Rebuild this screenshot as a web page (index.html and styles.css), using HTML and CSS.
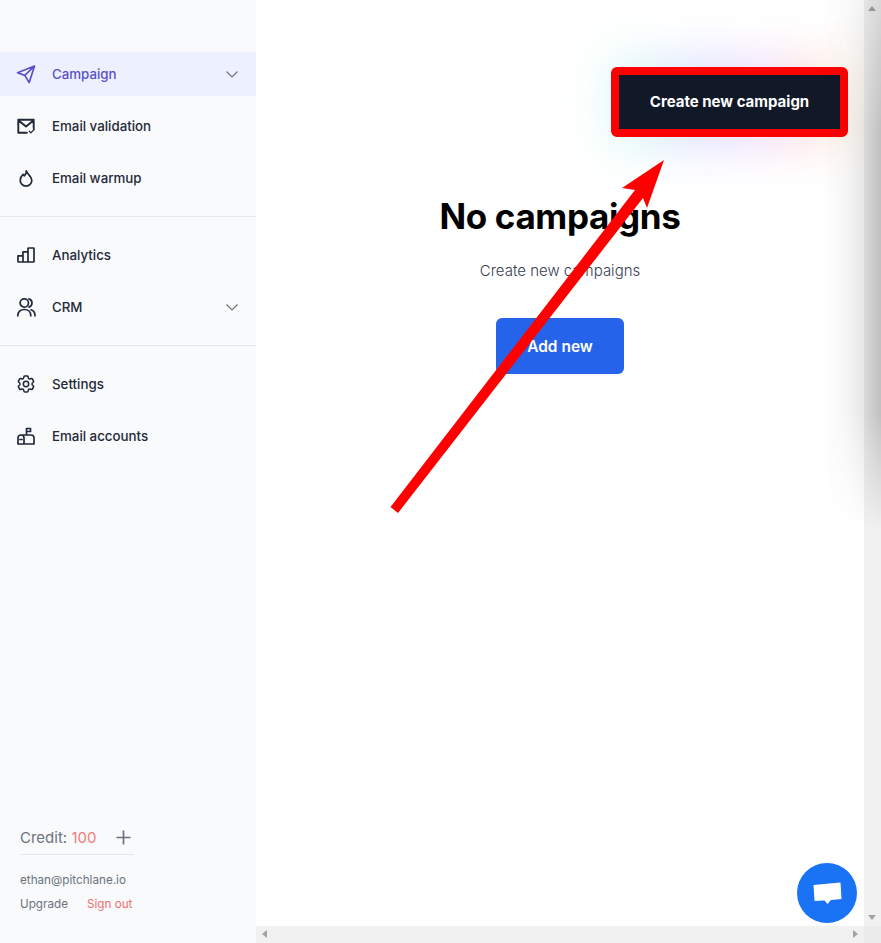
FILE: index.html
```html
<!DOCTYPE html>
<html>
<head>
<meta charset="UTF-8">
<title>Campaigns</title>
<link rel="stylesheet" href="styles.css">
</head>
<body>
<div class="app">
  <aside class="sidebar">
    <nav class="nav">
      <a class="nav_item nav_active">
        <svg class="nav_icon" viewBox="0 0 24 24"><path d="M20.500 4 3.500 10.700 10.800 13.400 15.200 20.600Z M10.800 13.400 20.500 4"/></svg>
        <span>Campaign</span>
        <svg class="nav_chevron" viewBox="0 0 12 12"><path d="M.5 3.500 6 9l5.500-5.500"/></svg>
      </a>
      <a class="nav_item">
        <svg class="nav_icon" viewBox="0 0 24 24"><path class="heavy" d="M12.800 18.800H4.300V5.800h15.400v8.400M4.300 6.200 12 12.500l7.700-6.300"/><path class="thin" d="M15.300 17.300l1.600 1.600 3.400-3.600"/></svg>
        <span>Email validation</span>
      </a>
      <a class="nav_item">
        <svg class="nav_icon" viewBox="0 0 24 24"><path d="M12.300 4.800c.2 2.200-.6 3.600-2 5-.5-.4-.9-.9-1.200-1.500-1.600 1.400-2.900 3.600-2.900 6a5.800 5.800 0 0 0 11.600 0c0-4-4.500-5.900-5.500-9.500Z"/></svg>
        <span>Email warmup</span>
      </a>
      <hr class="nav_rule">
      <a class="nav_item">
        <svg class="nav_icon" viewBox="0 0 24 24"><path d="M4 12.800h5V19H4.500a.5.500 0 0 1-.5-.5ZM9 8.800h5V19H9ZM14 5.500a.5.500 0 0 1 .5-.5h5a.5.500 0 0 1 .5.500v13a.5.500 0 0 1-.5.500H14Z"/></svg>
        <span>Analytics</span>
      </a>
      <a class="nav_item">
        <svg class="nav_icon" viewBox="0 0 24 24"><circle cx="10.300" cy="8" r="4.200"/><path d="M3.800 20.800c0-3.800 2.600-6.300 6.500-6.300s6.500 2.500 6.500 6.300M15 3.900a4.300 4.300 0 0 1 0 8.200M17 14.800c2.500.7 4 2.900 4 6"/></svg>
        <span>CRM</span>
        <svg class="nav_chevron" viewBox="0 0 12 12"><path d="M.5 3.500 6 9l5.500-5.500"/></svg>
      </a>
      <hr class="nav_rule">
      <a class="nav_item">
        <svg class="nav_icon" viewBox="-1.500 -1.500 27 27"><path d="M9.594 3.940c.09-.542.56-.94 1.110-.94h2.593c.55 0 1.020.398 1.110.94l.213 1.281c.063.374.313.686.645.870.074.04.147.083.22.127.325.196.72.257 1.075.124l1.217-.456a1.125 1.125 0 0 1 1.370.49l1.296 2.247a1.125 1.125 0 0 1-.26 1.431l-1.003.827c-.293.241-.438.613-.43.992a7.723 7.723 0 0 1 0 .255c-.008.378.137.75.43.991l1.004.827c.424.35.534.955.26 1.430l-1.298 2.247a1.125 1.125 0 0 1-1.369.491l-1.217-.456c-.355-.133-.75-.072-1.076.124a6.470 6.470 0 0 1-.22.128c-.331.183-.581.495-.644.869l-.213 1.281c-.09.543-.56.94-1.110.94h-2.594c-.55 0-1.019-.398-1.110-.94l-.213-1.281c-.062-.374-.312-.686-.644-.87a6.520 6.520 0 0 1-.22-.127c-.325-.196-.72-.257-1.076-.124l-1.217.456a1.125 1.125 0 0 1-1.369-.49l-1.297-2.247a1.125 1.125 0 0 1 .26-1.431l1.004-.827c.292-.24.437-.613.43-.991a6.932 6.932 0 0 1 0-.255c.007-.38-.138-.751-.43-.992l-1.004-.827a1.125 1.125 0 0 1-.26-1.430l1.297-2.247a1.125 1.125 0 0 1 1.370-.491l1.216.456c.356.133.751.072 1.076-.124.072-.044.146-.086.22-.128.332-.183.582-.495.644-.869l.214-1.280Z"/><circle cx="12" cy="12" r="3"/></svg>
        <span>Settings</span>
      </a>
      <a class="nav_item">
        <svg class="nav_icon" viewBox="0 0 24 24"><path d="M4 20v-6a3 3 0 0 1 3-3h10a3 3 0 0 1 3 3v6ZM10 20v-6a3 3 0 0 0-3-3M12.500 11V4.500h4v3h-4M6 15.500h2"/></svg>
        <span>Email accounts</span>
      </a>
    </nav>
    <div class="account">
      <div class="credit">
        <span>Credit: <b class="credit_num">100</b></span>
        <svg class="credit_add" viewBox="0 0 16 16"><path d="M8 .5v15M.5 8h15"/></svg>
      </div>
      <div class="account_mail">ethan@pitchlane.io</div>
      <div class="account_links">
        <a>Upgrade</a>
        <a class="signout">Sign out</a>
      </div>
    </div>
  </aside>

  <div class="content">
    <div class="content_row">
      <main class="main">
        <div class="toolbar">
          <div class="cta_wrap">
            <div class="cta">Create new campaign</div>
          </div>
        </div>
        <div class="empty">
          <h1>No campaigns</h1>
          <p>Create new campaigns</p>
          <div class="add_button">Add new</div>
        </div>
      </main>
      <div class="vscroll">
        <i class="tri tri_up"></i>
        <i class="tri tri_down"></i>
      </div>
    </div>
    <div class="hscroll">
      <div class="hscroll_track">
        <i class="tri tri_left"></i>
        <i class="tri tri_right"></i>
      </div>
      <div class="corner"></div>
    </div>
  </div>
</div>

<div class="drawer_shadow"></div>

<svg class="arrow" viewBox="0 0 881 943"><polygon points="390.500,507 635,190 622,188 664,160 647,208 643,198 398,513"/></svg>

<div class="chat">
  <svg viewBox="0 0 30 24"><path d="M1.500 4 28.500 1.500 29.500 18 19 19 15.500 23 12.500 19.500 2.500 20Z"/></svg>
</div>
</body>
</html>
```

FILE: styles.css
```css
html, body {
  height: 100%;
  margin: 0px;
  overflow: hidden;
}

body {
  font-family: Inter, "Noto Sans", sans-serif;
  background: #ffffff;
  color: #111827;
}

.app {
  display: flex;
  height: 943px;
}

/* sidebar */
.sidebar {
  width: 256px;
  flex: none;
  display: flex;
  flex-direction: column;
  background: #f9fafc;
}

.nav {
  padding-top: 52px;
}

.nav_item {
  display: flex;
  align-items: center;
  gap: 14px;
  height: 44px;
  margin-bottom: 8px;
  padding: 0 18px 0 14px;
  font-size: 13.3px;
  font-weight: 500;
  color: #1f2937;
}

.nav_active {
  background: #edf0fe;
  color: #5a50c8;
}

.nav_icon {
  width: 24px;
  height: 24px;
  flex: none;
  fill: none;
  stroke: currentColor;
  stroke-width: 1.700;
  stroke-linejoin: round;
  stroke-linecap: round;
}

.nav_icon .thin {
  stroke-width: 1.300;
}

.nav_icon .heavy {
  stroke-width: 1.900;
}

.nav_chevron {
  width: 12px;
  height: 12px;
  margin-left: auto;
  fill: none;
  stroke: #6b7280;
  stroke-width: 1.100;
}

.nav_rule {
  height: 1px;
  margin: 16px 0;
  border: 0;
  background: #e5e7eb;
}

.account {
  margin-top: auto;
  padding: 0 0 31px 20px;
  color: #6b7280;
}

.credit {
  display: flex;
  align-items: center;
  justify-content: space-between;
  box-sizing: border-box;
  width: 114px;
  height: 33px;
  padding: 0 3px 1px 0;
  border-bottom: 1px solid #e5e7eb;
  font-size: 15px;
}

.credit_num {
  font-weight: 400;
  color: #f07a7a;
}

.credit_add {
  width: 15px;
  height: 15px;
  fill: none;
  stroke: #6b7280;
  stroke-width: 1.800;
}

.account_mail {
  margin-top: 18px;
  font-size: 11.700px;
  line-height: 15px;
}

.account_links {
  display: flex;
  gap: 19px;
  margin-top: 9px;
  font-size: 11.700px;
  line-height: 15px;
}

.signout {
  color: #ef6f6f;
}

/* main area */
.content {
  flex: 1;
  display: flex;
  flex-direction: column;
  min-width: 0;
}

.content_row {
  flex: 1;
  display: flex;
  min-height: 0;
}

.main {
  flex: 1;
  min-width: 0;
}

.toolbar {
  display: flex;
  justify-content: flex-end;
  padding: 67px 16px 0 0;
}

.cta_wrap {
  position: relative;
}

.cta_wrap::before {
  content: "";
  position: absolute;
  inset: -8px 0;
  background: linear-gradient(90deg, #6dffd0, #7f82ff 40%, #c080ff 62%, #ff8585 82%, #ffe37a);
  filter: blur(24px);
  opacity: 0.27;
}

.cta {
  position: relative;
  box-sizing: border-box;
  width: 237px;
  height: 70px;
  border: 8px solid #ff0000;
  border-radius: 6px;
  background: #111827;
  color: #ffffff;
  font-size: 15px;
  font-weight: 700;
  line-height: 53px;
  text-align: center;
}

.empty {
  display: flex;
  flex-direction: column;
  align-items: center;
  padding-top: 55px;
}

.empty h1 {
  margin: 0;
  font-size: 35px;
  line-height: 48px;
  font-weight: 700;
  letter-spacing: -0.35px;
  color: #000000;
}

.empty p {
  margin: 21px 0 0;
  font-size: 15px;
  line-height: 20px;
  font-weight: 300;
  color: #374151;
}

.add_button {
  width: 128px;
  height: 56px;
  margin-top: 37px;
  border-radius: 6px;
  background: #2563eb;
  color: #ffffff;
  font-size: 15.500px;
  font-weight: 600;
  line-height: 57px;
  text-align: center;
}

/* scrollbars */
.vscroll {
  position: relative;
  width: 17px;
  flex: none;
  background: #f1f1f1;
}

.hscroll {
  display: flex;
  height: 17px;
  flex: none;
}

.hscroll_track {
  position: relative;
  flex: 1;
  background: #f1f1f1;
}

.corner {
  width: 17px;
  background: #ebebeb;
}

.tri {
  position: absolute;
  width: 0;
  height: 0;
  border: 4px solid transparent;
}

.tri_up {
  top: 2px;
  left: 4px;
  border-bottom: 5px solid #a3a3a3;
}

.tri_down {
  bottom: 2px;
  left: 4px;
  border-top: 5px solid #a3a3a3;
}

.tri_left {
  top: 4px;
  left: 2px;
  border-right: 5px solid #a3a3a3;
}

.tri_right {
  top: 4px;
  right: 2px;
  border-left: 5px solid #a3a3a3;
}

/* overlays */
.drawer_shadow {
  position: absolute;
  top: 0;
  right: 0;
  width: 60px;
  height: 530px;
  background: linear-gradient(to left, rgba(0, 0, 0, 0.2), rgba(0, 0, 0, 0.09) 30%, rgba(0, 0, 0, 0.03) 60%, rgba(0, 0, 0, 0));
  -webkit-mask-image: linear-gradient(to bottom, rgba(0, 0, 0, 0.5), #000000 25%, #000000 78%, rgba(0, 0, 0, 0));
  mask-image: linear-gradient(to bottom, rgba(0, 0, 0, 0.5), #000000 25%, #000000 78%, rgba(0, 0, 0, 0));
}

.arrow {
  position: absolute;
  top: 0;
  left: 0;
  width: 881px;
  height: 943px;
  fill: #ff0000;
  pointer-events: none;
}

.chat {
  position: absolute;
  top: 863px;
  left: 797px;
  width: 60px;
  height: 60px;
  display: flex;
  align-items: center;
  justify-content: center;
  border-radius: 50%;
  background: #1a73f5;
}

.chat svg {
  width: 30px;
  height: 24px;
  fill: #ffffff;
}
```
